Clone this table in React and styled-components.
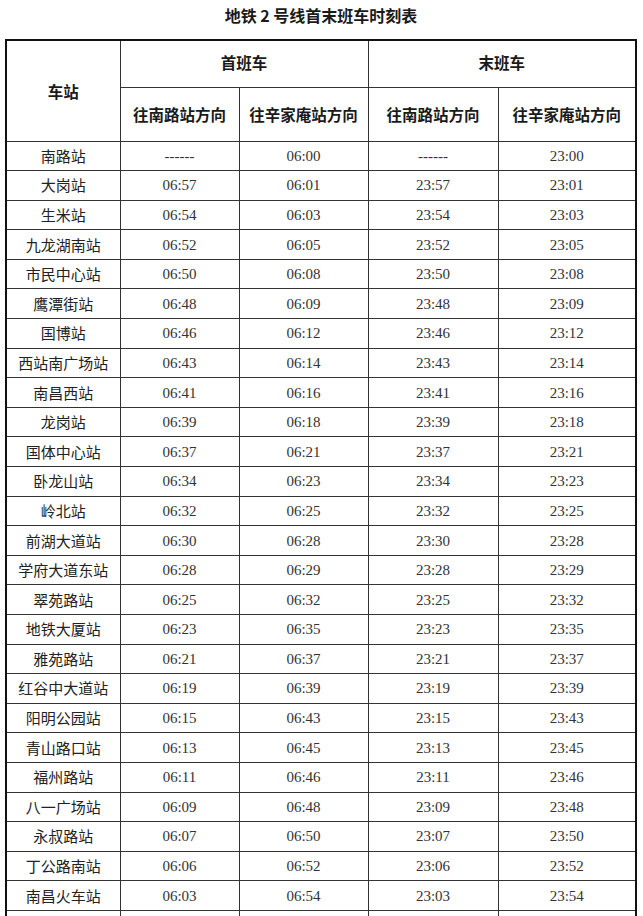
import React from "react";
import styled, { createGlobalStyle } from "styled-components";

const GlobalStyle = createGlobalStyle`
  html, body {
    margin: 0;
    padding: 0;
    background: #fff;
  }
  body {
    font-family: "Liberation Serif", "Noto Sans CJK SC", serif;
    color: #222;
  }
`;

const rows = [
  ["南路站", "------", "06:00", "------", "23:00"],
  ["大岗站", "06:57", "06:01", "23:57", "23:01"],
  ["生米站", "06:54", "06:03", "23:54", "23:03"],
  ["九龙湖南站", "06:52", "06:05", "23:52", "23:05"],
  ["市民中心站", "06:50", "06:08", "23:50", "23:08"],
  ["鹰潭街站", "06:48", "06:09", "23:48", "23:09"],
  ["国博站", "06:46", "06:12", "23:46", "23:12"],
  ["西站南广场站", "06:43", "06:14", "23:43", "23:14"],
  ["南昌西站", "06:41", "06:16", "23:41", "23:16"],
  ["龙岗站", "06:39", "06:18", "23:39", "23:18"],
  ["国体中心站", "06:37", "06:21", "23:37", "23:21"],
  ["卧龙山站", "06:34", "06:23", "23:34", "23:23"],
  ["岭北站", "06:32", "06:25", "23:32", "23:25"],
  ["前湖大道站", "06:30", "06:28", "23:30", "23:28"],
  ["学府大道东站", "06:28", "06:29", "23:28", "23:29"],
  ["翠苑路站", "06:25", "06:32", "23:25", "23:32"],
  ["地铁大厦站", "06:23", "06:35", "23:23", "23:35"],
  ["雅苑路站", "06:21", "06:37", "23:21", "23:37"],
  ["红谷中大道站", "06:19", "06:39", "23:19", "23:39"],
  ["阳明公园站", "06:15", "06:43", "23:15", "23:43"],
  ["青山路口站", "06:13", "06:45", "23:13", "23:45"],
  ["福州路站", "06:11", "06:46", "23:11", "23:46"],
  ["八一广场站", "06:09", "06:48", "23:09", "23:48"],
  ["永叔路站", "06:07", "06:50", "23:07", "23:50"],
  ["丁公路南站", "06:06", "06:52", "23:06", "23:52"],
  ["南昌火车站", "06:03", "06:54", "23:03", "23:54"],
  ["顺化门站", "06:01", "06:56", "23:01", "23:56"],
];

const Page = styled.div`
  padding: 0 6px 0 5px;
`;

const Title = styled.h1`
  margin: 0;
  height: 39px;
  padding-top: 3px;
  box-sizing: border-box;
  text-align: center;
  font-family: "Noto Sans CJK SC", sans-serif;
  font-size: 16px;
  font-weight: 700;
  color: #1a1a1a;
  line-height: 24px;
`;

const Table = styled.table`
  width: 632px;
  border-collapse: collapse;
  table-layout: fixed;
  border: 2px solid #111;
`;

const HeadRow = styled.tr`
  height: ${(p) => p.$h}px;
`;

const HeadCell = styled.th`
  border: 1px solid #333;
  font-family: "Noto Sans CJK SC", sans-serif;
  font-weight: 700;
  font-size: 15.5px;
  color: #1a1a1a;
  text-align: center;
  vertical-align: middle;
  padding: 0 0 ${(p) => p.$lift || 0}px;
  white-space: nowrap;
`;

const Row = styled.tr`
  height: 29.6px;
`;

const Cell = styled.td`
  border: 1px solid #333;
  padding: 0;
  text-align: center;
  vertical-align: middle;
  font-size: 15px;
  color: #333;
  white-space: nowrap;
  line-height: 18px;
`;

const StationCell = styled(Cell)`
  font-family: "Noto Sans CJK SC", sans-serif;
  font-size: 15px;
  color: #222;
`;

export default function App() {
  return (
    <Page>
      <GlobalStyle />
      <Title>地铁 2 号线首末班车时刻表</Title>
      <Table>
        <colgroup>
          <col style={{ width: 114 }} />
          <col style={{ width: 119 }} />
          <col style={{ width: 129 }} />
          <col style={{ width: 130 }} />
          <col style={{ width: 138 }} />
        </colgroup>
        <thead>
          <HeadRow $h={47}>
            <HeadCell rowSpan={2}>车站</HeadCell>
            <HeadCell colSpan={2} $lift={3}>首班车</HeadCell>
            <HeadCell colSpan={2} $lift={3}>末班车</HeadCell>
          </HeadRow>
          <HeadRow $h={54}>
            <HeadCell>往南路站方向</HeadCell>
            <HeadCell>往辛家庵站方向</HeadCell>
            <HeadCell>往南路站方向</HeadCell>
            <HeadCell>往辛家庵站方向</HeadCell>
          </HeadRow>
        </thead>
        <tbody>
          {rows.map((r) => (
            <Row key={r[0]}>
              <StationCell>{r[0]}</StationCell>
              <Cell>{r[1]}</Cell>
              <Cell>{r[2]}</Cell>
              <Cell>{r[3]}</Cell>
              <Cell>{r[4]}</Cell>
            </Row>
          ))}
        </tbody>
      </Table>
    </Page>
  );
}
